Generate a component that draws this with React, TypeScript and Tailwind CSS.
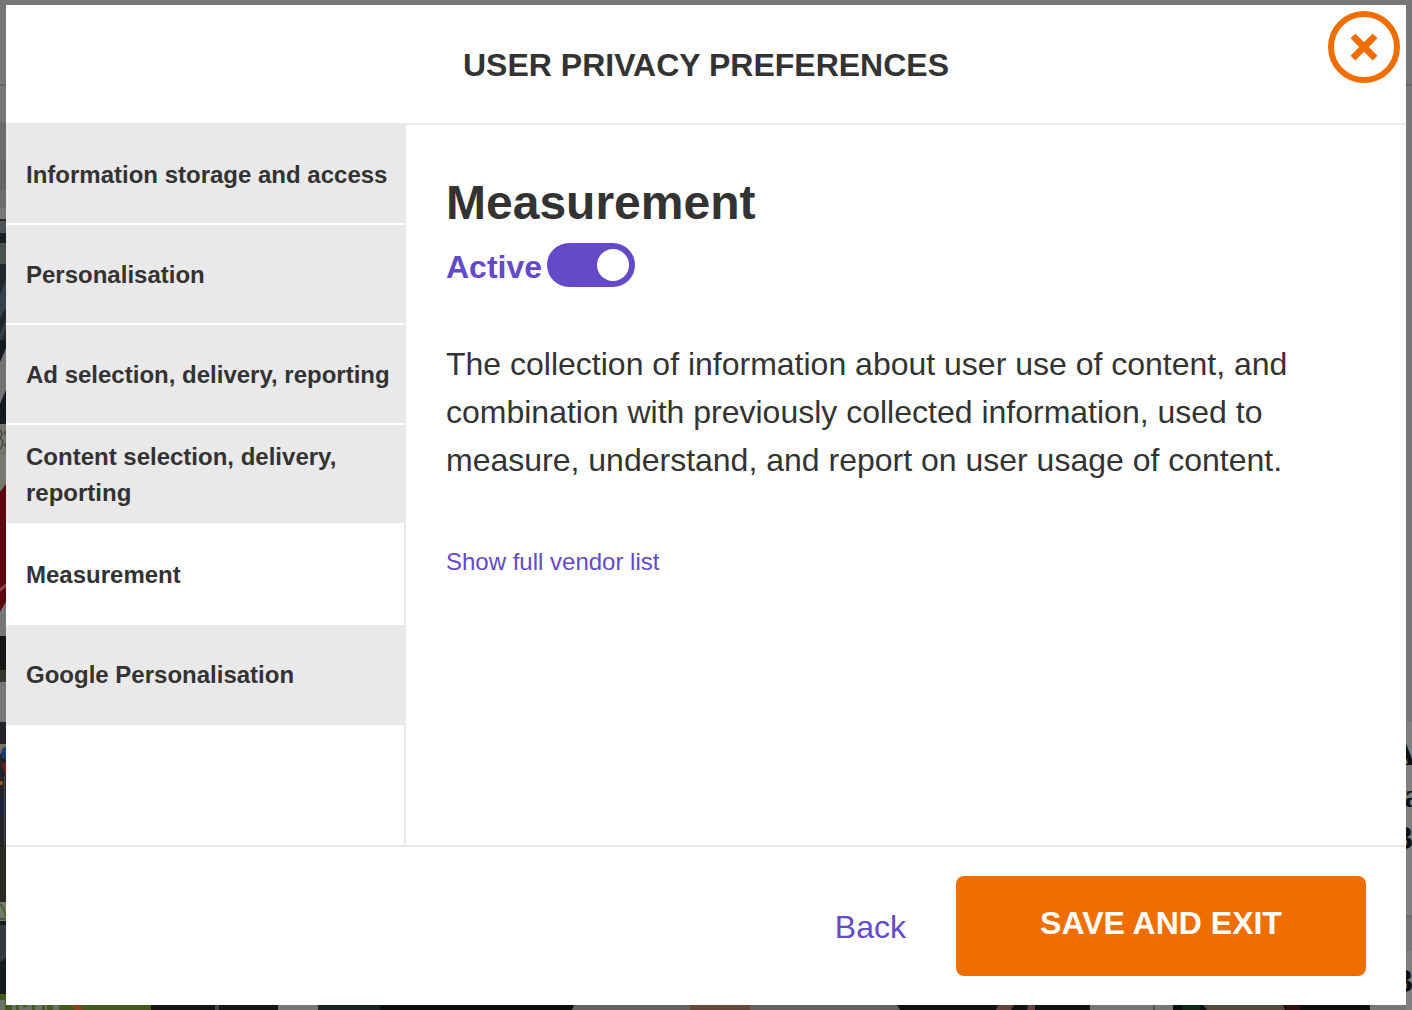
import { useState } from 'react';

const categories = [
  'Information storage and access',
  'Personalisation',
  'Ad selection, delivery, reporting',
  'Content selection, delivery, reporting',
  'Measurement',
  'Google Personalisation',
];

// Dimmed page that shows around the dialog's edges.
function Backdrop() {
  return (
    <svg
      aria-hidden="true"
      className="absolute inset-0 h-full w-full"
      viewBox="0 0 1412 1010"
      preserveAspectRatio="none"
    >
      <rect width="1412" height="1010" fill="#777777" />
      <rect y="84" width="1412" height="2" fill="#646464" />
      <g>
        <rect y="122" width="6" height="88" fill="#6c6c6f" />
        <rect y="160" width="6" height="30" fill="#676467" />
        <rect y="208" width="6" height="11" fill="#777777" />
        <rect y="219" width="6" height="2" fill="#282828" />
        <rect y="221" width="6" height="12" fill="#505458" />
        <rect y="233" width="6" height="10" fill="#1c1f24" />
        <rect y="243" width="6" height="21" fill="#48524f" />
        <rect y="264" width="6" height="80" fill="#20282e" />
        <path d="M0 294l6-14v28l-6 10zM0 334l6-14v8l-6 16z" fill="#354049" />
        <rect y="344" width="6" height="82" fill="#737376" />
        <path d="M0 340h6v8l-6 14zM0 404l6-14v34H0z" fill="#15181c" />
        <rect y="424" width="6" height="64" fill="#73736f" />
        <path d="M0 430q4 4 0 8q6 4 0 11M6 431q-3 2 0 4M6 443q-3 2 0 4" fill="none" stroke="#303030" />
        <rect y="455" width="6" height="33" fill="#77776e" />
        <path d="M0 492l6-8v118l-6 10z" fill="#5b090e" />
        <path d="M0 588l6-5v4l-6 5z" fill="#8b4044" />
        <path d="M0 612l6-10v34H0z" fill="#77777a" />
        <rect y="636" width="6" height="46" fill="#171614" />
        <rect y="670" width="6" height="12" fill="#36352f" />
        <rect y="722" width="6" height="168" fill="#232427" />
        <path d="M0 744h6v6l-6 4z" fill="#77745b" />
        <circle cx="8" cy="753" r="7" fill="#173f79" />
        <path d="M1 763h5v13z" fill="#7a1924" />
        <circle cx="1" cy="783" r="2" fill="#a3521d" />
        <rect y="797" width="6" height="20" fill="#1e2137" />
        <rect x="4" y="776" width="1" height="70" fill="#484b50" />
        <rect y="846" width="6" height="56" fill="#282c25" />
        <path d="M0 902h6v18H0z" fill="#747970" />
        <path d="M0 904q5 5 6 13M0 919h6" fill="none" stroke="#496322" strokeWidth="2" />
        <rect y="921" width="6" height="73" fill="#171b20" />
        <path d="M0 925h6v33l-4 3H0z" fill="#313b40" />
        <rect y="994" width="6" height="16" fill="#405c1c" />
      </g>
      <g>
        <rect y="1005" width="151" height="5" fill="#435a1d" />
        <path d="M0 1000h5v10H0zM12 1005h4v5h-4zM19 1005h3l3 3 3-3h4v5H19zM35 1005h7v5h-7zM45 1005h2v5h-2zM53 1005h6v5h-6z" fill="#6c7168" />
        <path d="M72 1005h8l3 5h-8z" fill="#8b4215" />
        <rect x="151" y="1005" width="127" height="5" fill="#151515" />
        <rect x="215" y="1005" width="4" height="5" fill="#44444a" />
        <rect x="278" y="1005" width="40" height="5" fill="#777777" />
        <rect x="318" y="1005" width="62" height="5" fill="#1b2424" />
        <rect x="380" y="1005" width="194" height="5" fill="#0c0e0f" />
        <path d="M574 1005h323l3 5H572z" fill="#65615e" />
        <rect x="690" y="1005" width="60" height="5" fill="#664637" />
        <path d="M897 1005h193v5H900z" fill="#111414" />
        <path d="M998 1005h16l-3 5h-15zM1028 1005h7v5h-8z" fill="#634240" />
        <rect x="1153" y="1005" width="2" height="5" fill="#4b534e" />
        <rect x="1173" y="1005" width="197" height="5" fill="#0c1010" />
        <rect x="1182" y="1005" width="18" height="5" fill="#102817" />
        <path d="M1203 1005h80l2 5h-78z" fill="#57483f" />
        <rect x="1286" y="1005" width="14" height="5" fill="#310e10" />
      </g>
      <rect x="1406" y="722" width="6" height="288" fill="#808080" />
      <rect x="1406" y="915" width="6" height="3" fill="#6d6d6d" />
      <rect x="1406" y="918" width="6" height="33" fill="#777777" />
      <g fill="#111111" fontFamily="Liberation Serif, serif" fontWeight="700" fontSize="34">
        <text x="1391" y="765">A</text>
        <text x="1404" y="807">a</text>
        <text x="1396" y="849">3</text>
        <text x="1396" y="992">3</text>
      </g>
    </svg>
  );
}

export default function App() {
  const [selected, setSelected] = useState(4);
  const [active, setActive] = useState(true);

  return (
    <div className="relative flex min-h-screen overflow-hidden px-1.5 py-[5px] font-['Liberation_Sans',Arial,sans-serif] text-[#333333]">
      <Backdrop />
      <section
        role="dialog"
        aria-labelledby="dialog-title"
        className="relative flex flex-1 flex-col bg-white"
      >
        <header className="border-b-2 border-[#e9e9e9] px-20 pt-9 pb-[34px] text-center">
          <h1 id="dialog-title" className="text-[32px] leading-[48px] font-bold">
            USER PRIVACY PREFERENCES
          </h1>
          <button
            type="button"
            aria-label="Close"
            className="absolute top-1.5 right-1.5 size-18 cursor-pointer rounded-full"
          >
            <svg viewBox="0 0 72 72" className="size-full" fill="none" stroke="#f06e00">
              <circle cx="36" cy="36" r="33" strokeWidth="6" />
              <path d="M24.9 24.9l22.2 22.2M47.1 24.9l-22.2 22.2" strokeWidth="6.8" />
            </svg>
          </button>
        </header>

        <div className="flex flex-1">
          <nav
            aria-label="Preference categories"
            className="w-[400px] shrink-0 border-r-2 border-[#e9e9e9]"
          >
            {categories.map((name, i) => (
              <button
                key={name}
                type="button"
                aria-current={selected === i}
                onClick={() => setSelected(i)}
                className={`flex h-25 w-full cursor-pointer items-center border-b-2 border-white pt-0.5 pr-2 pl-5 text-left text-2xl leading-9 font-bold last:border-[#e9e9e9] ${
                  selected === i ? 'bg-white' : 'bg-[#e9e9e9]'
                }`}
              >
                {name}
              </button>
            ))}
          </nav>

          <main className="flex-1 px-10 pt-[42px]">
            <h2 className="text-5xl leading-[72px] font-bold">{categories[selected]}</h2>
            <label className="flex h-13 cursor-pointer items-center gap-[5px] text-[32px] font-bold text-[#6449c9]">
              <span className="pt-1">{active ? 'Active' : 'Inactive'}</span>
              <input
                type="checkbox"
                role="switch"
                checked={active}
                onChange={(e) => setActive(e.target.checked)}
                className="h-11 w-22 cursor-pointer appearance-none rounded-full bg-gray-400 p-1.5 before:block before:size-8 before:rounded-full before:bg-white checked:bg-[#6449c9] checked:before:ml-11"
              />
            </label>
            <p className="mt-[49px] text-[32px] leading-[48px]">
              The collection of information about user use of content, and combination with
              previously collected information, used to measure, understand, and report on user
              usage of content.
            </p>
            <a href="#vendors" className="mt-15 inline-block text-2xl leading-9 text-[#6449c9]">
              Show full vendor list
            </a>
          </main>
        </div>

        <footer className="flex items-center justify-end gap-[50px] border-t-2 border-[#e9e9e9] px-10 py-[29px]">
          <button type="button" className="cursor-pointer pt-0.5 text-[32px] leading-[48px] text-[#6449c9]">
            Back
          </button>
          <button
            type="button"
            className="h-25 w-[410px] cursor-pointer rounded-lg bg-[#f06e00] pb-1.5 text-[32px] font-bold text-white"
          >
            SAVE AND EXIT
          </button>
        </footer>
      </section>
    </div>
  );
}
